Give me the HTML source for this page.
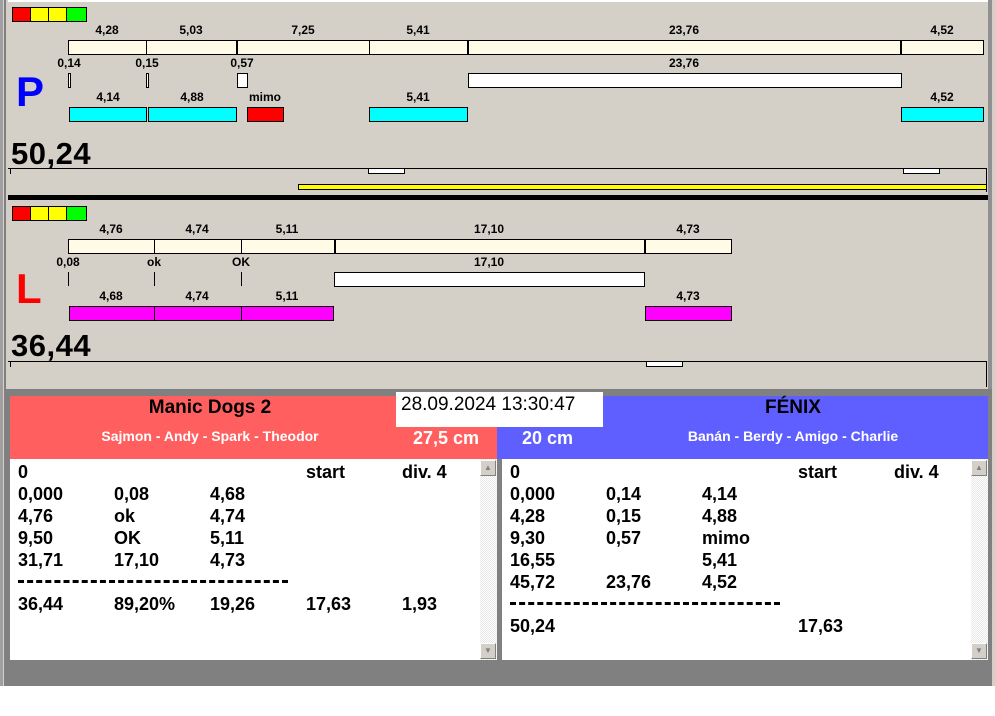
<!DOCTYPE html>
<html><head><meta charset="utf-8"><style>
*{margin:0;padding:0;box-sizing:border-box}
body{width:995px;height:716px;background:#fff;position:relative;overflow:hidden;font-family:"Liberation Sans",Arial,sans-serif}
div{position:absolute}
.b{border:1px solid #000}
.cr{background:#fffbe6}
.cy{background:#00ffff}
.mg{background:#ff00ff}
.w{background:#fff}
.l{font-size:12px;font-weight:bold;text-align:center;width:80px;color:#000}
.t{font-size:18px;font-weight:bold;color:#000}
.sb{background:repeating-conic-gradient(#e8e8e8 0 25%,#fff 0 50%) 0 0/2px 2px}
.btn{background:#d4d0c8;border:1px solid;border-color:#fff #808080 #808080 #fff;width:16px;height:16px;font-size:8px;color:#808080;text-align:center;line-height:14px}
.big{font-size:31px;font-weight:bold;color:#000;letter-spacing:0.5px}
</style></head><body>
<div style="left:0;top:0;width:995px;height:686px;background:#d4d0c8"></div>
<div style="left:0;top:0;width:3px;height:686px;background:#a0a0a0"></div>
<div style="left:4px;top:0;width:2px;height:686px;background:#808080"></div>
<div style="left:988px;top:0;width:4px;height:390px;background:#909090"></div>
<div style="left:8px;top:0;width:980px;height:2px;background:#fff"></div>

<!-- P section -->
<div class="b" style="left:12px;top:7px;width:19px;height:15px;background:#f00"></div>
<div class="b" style="left:30px;top:7px;width:19px;height:15px;background:#ff0"></div>
<div class="b" style="left:48px;top:7px;width:19px;height:15px;background:#ff0"></div>
<div class="b" style="left:66px;top:7px;width:21px;height:15px;background:#0f0"></div>

<div class="l" style="left:67px;top:23px">4,28</div>
<div class="l" style="left:151px;top:23px">5,03</div>
<div class="l" style="left:263px;top:23px">7,25</div>
<div class="l" style="left:378px;top:23px">5,41</div>
<div class="l" style="left:644px;top:23px">23,76</div>
<div class="l" style="left:902px;top:23px">4,52</div>
<div class="b cr" style="left:68px;top:40px;width:79px;height:15px"></div>
<div class="b cr" style="left:146px;top:40px;width:92px;height:15px"></div>
<div class="b cr" style="left:236px;top:40px;width:134px;height:15px;border-left-width:2px"></div>
<div class="b cr" style="left:369px;top:40px;width:100px;height:15px"></div>
<div class="b cr" style="left:467px;top:40px;width:435px;height:15px;border-left-width:2px"></div>
<div class="b cr" style="left:900px;top:40px;width:84px;height:15px;border-left-width:2px"></div>

<div class="l" style="left:29px;top:56px">0,14</div>
<div class="l" style="left:107px;top:56px">0,15</div>
<div class="l" style="left:202px;top:56px">0,57</div>
<div class="l" style="left:644px;top:56px">23,76</div>
<div class="b w" style="left:68px;top:73px;width:3px;height:15px"></div>
<div class="b w" style="left:146px;top:73px;width:3px;height:15px"></div>
<div class="b w" style="left:237px;top:73px;width:11px;height:15px"></div>
<div class="b w" style="left:468px;top:73px;width:434px;height:15px"></div>

<div style="left:16px;top:68px;font-size:42px;font-weight:bold;color:#0000ff">P</div>
<div class="l" style="left:68px;top:90px">4,14</div>
<div class="l" style="left:152px;top:90px">4,88</div>
<div class="l" style="left:225px;top:90px">mimo</div>
<div class="l" style="left:378px;top:90px">5,41</div>
<div class="l" style="left:902px;top:90px">4,52</div>
<div class="b cy" style="left:69px;top:107px;width:78px;height:15px"></div>
<div class="b cy" style="left:148px;top:107px;width:89px;height:15px"></div>
<div class="b" style="left:247px;top:107px;width:37px;height:15px;background:#f00"></div>
<div class="b cy" style="left:369px;top:107px;width:99px;height:15px"></div>
<div class="b cy" style="left:901px;top:107px;width:83px;height:15px"></div>

<div class="big" style="left:11px;top:136px">50,24</div>
<div style="left:8px;top:168px;width:979px;height:1px;background:#000"></div>
<div style="left:10px;top:168px;width:1px;height:6px;background:#000"></div>
<div style="left:986px;top:168px;width:1px;height:24px;background:#000"></div>
<div class="b w" style="left:368px;top:168px;width:37px;height:6px"></div>
<div class="b w" style="left:903px;top:168px;width:37px;height:6px"></div>
<div class="b" style="left:298px;top:184px;width:689px;height:6px;background:#ff0"></div>
<div style="left:8px;top:195px;width:980px;height:5px;background:#000"></div>

<!-- L section -->
<div class="b" style="left:12px;top:206px;width:19px;height:15px;background:#f00"></div>
<div class="b" style="left:30px;top:206px;width:19px;height:15px;background:#ff0"></div>
<div class="b" style="left:48px;top:206px;width:19px;height:15px;background:#ff0"></div>
<div class="b" style="left:66px;top:206px;width:21px;height:15px;background:#0f0"></div>

<div class="l" style="left:71px;top:222px">4,76</div>
<div class="l" style="left:157px;top:222px">4,74</div>
<div class="l" style="left:247px;top:222px">5,11</div>
<div class="l" style="left:449px;top:222px">17,10</div>
<div class="l" style="left:648px;top:222px">4,73</div>
<div class="b cr" style="left:68px;top:239px;width:87px;height:15px"></div>
<div class="b cr" style="left:154px;top:239px;width:88px;height:15px"></div>
<div class="b cr" style="left:241px;top:239px;width:94px;height:15px"></div>
<div class="b cr" style="left:334px;top:239px;width:312px;height:15px;border-left-width:2px"></div>
<div class="b cr" style="left:644px;top:239px;width:88px;height:15px;border-left-width:2px"></div>

<div class="l" style="left:28px;top:255px">0,08</div>
<div class="l" style="left:114px;top:255px">ok</div>
<div class="l" style="left:201px;top:255px">OK</div>
<div class="l" style="left:449px;top:255px">17,10</div>
<div style="left:68px;top:272px;width:1px;height:14px;background:#000"></div>
<div style="left:154px;top:272px;width:1px;height:14px;background:#000"></div>
<div style="left:241px;top:272px;width:1px;height:14px;background:#000"></div>
<div class="b w" style="left:334px;top:272px;width:311px;height:15px"></div>

<div style="left:16px;top:265px;font-size:42px;font-weight:bold;color:#ff0000">L</div>
<div class="l" style="left:71px;top:289px">4,68</div>
<div class="l" style="left:157px;top:289px">4,74</div>
<div class="l" style="left:247px;top:289px">5,11</div>
<div class="l" style="left:648px;top:289px">4,73</div>
<div class="b mg" style="left:69px;top:306px;width:86px;height:15px"></div>
<div class="b mg" style="left:154px;top:306px;width:88px;height:15px"></div>
<div class="b mg" style="left:241px;top:306px;width:93px;height:15px"></div>
<div class="b mg" style="left:645px;top:306px;width:87px;height:15px"></div>

<div class="big" style="left:11px;top:328px">36,44</div>
<div style="left:8px;top:361px;width:979px;height:1px;background:#000"></div>
<div style="left:10px;top:361px;width:1px;height:6px;background:#000"></div>
<div style="left:986px;top:361px;width:1px;height:26px;background:#000"></div>
<div class="b w" style="left:646px;top:361px;width:37px;height:6px"></div>

<!-- bottom gray -->
<div style="left:6px;top:389px;width:986px;height:297px;background:#808080"></div>

<!-- headers -->
<div style="left:10px;top:396px;width:487px;height:63px;background:#ff5f5f"></div>
<div style="left:497px;top:396px;width:491px;height:63px;background:#5f5fff"></div>
<div style="left:10px;top:397px;width:400px;text-align:center;font-size:19px;font-weight:bold;color:#000">Manic Dogs 2</div>
<div style="left:10px;top:428px;width:400px;text-align:center;font-size:14px;font-weight:bold;color:#fff">Sajmon - Andy - Spark - Theodor</div>
<div style="left:413px;top:428px;font-size:18px;font-weight:bold;color:#fff">27,5 cm</div>
<div style="left:522px;top:428px;font-size:18px;font-weight:bold;color:#fff">20 cm</div>
<div style="left:603px;top:397px;width:380px;text-align:center;font-size:19px;font-weight:bold;color:#000">FÉNIX</div>
<div style="left:603px;top:428px;width:380px;text-align:center;font-size:14px;font-weight:bold;color:#fff">Banán - Berdy - Amigo - Charlie</div>
<div style="left:396px;top:392px;width:207px;height:35px;background:#fff;font-size:19px;color:#000;padding:2px 0 0 5px">28.09.2024 13:30:47</div>

<!-- left table -->
<div style="left:10px;top:459px;width:470px;height:201px;background:#fff"></div>
<div class="sb" style="left:480px;top:459px;width:17px;height:201px"></div>
<div class="btn" style="left:480px;top:460px">▲</div>
<div class="btn" style="left:480px;top:643px">▼</div>
<div class="t" style="left:18px;top:461px;line-height:22px">0<br>0,000<br>4,76<br>9,50<br>31,71<br><br>36,44</div>
<div class="t" style="left:114px;top:461px;line-height:22px"><br>0,08<br>ok<br>OK<br>17,10<br><br>89,20%</div>
<div class="t" style="left:210px;top:461px;line-height:22px"><br>4,68<br>4,74<br>5,11<br>4,73<br><br>19,26</div>
<div class="t" style="left:306px;top:461px;line-height:22px">start<br><br><br><br><br><br>17,63</div>
<div class="t" style="left:402px;top:461px;line-height:22px">div. 4<br><br><br><br><br><br>1,93</div>
<div style="left:18px;top:580px;width:270px;border-top:3px dashed #000"></div>

<!-- right table -->
<div style="left:502px;top:459px;width:469px;height:201px;background:#fff"></div>
<div class="sb" style="left:971px;top:459px;width:17px;height:201px"></div>
<div class="btn" style="left:971px;top:460px">▲</div>
<div class="btn" style="left:971px;top:643px">▼</div>
<div class="t" style="left:510px;top:461px;line-height:22px">0<br>0,000<br>4,28<br>9,30<br>16,55<br>45,72<br><br>50,24</div>
<div class="t" style="left:606px;top:461px;line-height:22px"><br>0,14<br>0,15<br>0,57<br><br>23,76</div>
<div class="t" style="left:702px;top:461px;line-height:22px"><br>4,14<br>4,88<br>mimo<br>5,41<br>4,52</div>
<div class="t" style="left:798px;top:461px;line-height:22px">start<br><br><br><br><br><br><br>17,63</div>
<div class="t" style="left:894px;top:461px;line-height:22px">div. 4</div>
<div style="left:510px;top:602px;width:270px;border-top:3px dashed #000"></div>
</body></html>
